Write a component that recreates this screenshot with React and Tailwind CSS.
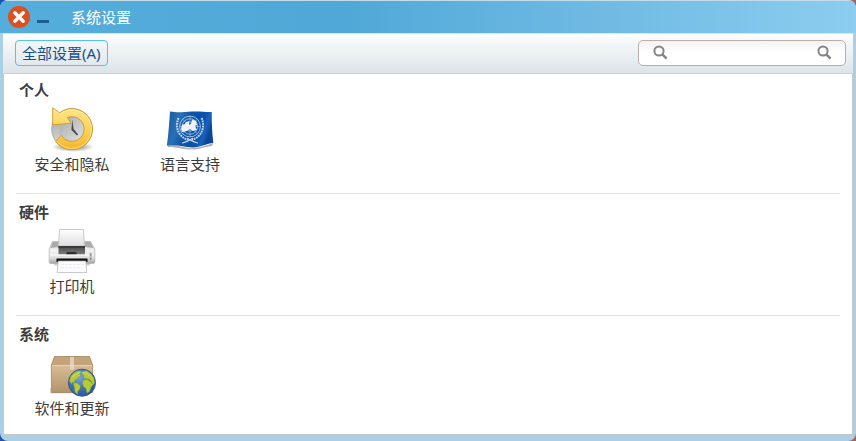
function ClockIcon() {
  return (
    <svg viewBox="0 0 48 48" className="h-12 w-12" aria-hidden="true">
      <defs>
        <linearGradient id="clock-ring" x1="0" y1="0" x2="0" y2="1">
          <stop offset="0" stopColor="#fde58a" />
          <stop offset="0.5" stopColor="#fcd45a" />
          <stop offset="1" stopColor="#f5b52c" />
        </linearGradient>
        <linearGradient id="clock-face" x1="0" y1="0" x2="1" y2="1">
          <stop offset="0" stopColor="#a8a8a8" />
          <stop offset="1" stopColor="#e4e4e4" />
        </linearGradient>
        <linearGradient id="clock-rim" x1="0" y1="0" x2="0" y2="1">
          <stop offset="0" stopColor="#9c9c9c" />
          <stop offset="1" stopColor="#dedede" />
        </linearGradient>
        <radialGradient id="clock-shadow">
          <stop offset="0.5" stopColor="#000" stopOpacity="0.28" />
          <stop offset="1" stopColor="#000" stopOpacity="0" />
        </radialGradient>
      </defs>
      <ellipse cx="25" cy="41" rx="21" ry="5" fill="url(#clock-shadow)" />
      <circle cx="24" cy="23" r="20.3" fill="url(#clock-rim)" stroke="#a2a2a2" strokeWidth="0.8" />
      <circle cx="24" cy="23" r="12.8" fill="url(#clock-face)" stroke="#bcbcbc" />
      <path d="M24.2 13.5L25.6 23L30.2 28.4L29 29.6L23.4 24Z" fill="#4c4c4c" />
      <path
        d="M4.7 1.8L11.6 6.8A20.5 20.5 0 1 1 7.6 35.4L13.2 29.4A12.4 12.4 0 1 0 19.4 11.4L23 17.3L4.7 18.8Z"
        fill="url(#clock-ring)"
        stroke="#cf9a26"
        strokeWidth="0.9"
        strokeLinejoin="round"
      />
      <path
        d="M5.8 3.8L11.8 8.2A19.3 19.3 0 1 1 9 35.4"
        fill="none"
        stroke="#fff0b4"
        strokeWidth="0.9"
        opacity="0.7"
      />
    </svg>
  )
}

function FlagIcon() {
  return (
    <svg viewBox="0 0 48 48" className="h-12 w-12" aria-hidden="true">
      <defs>
        <linearGradient id="flag-cloth" x1="0" y1="0" x2="1" y2="0.25">
          <stop offset="0" stopColor="#17579f" />
          <stop offset="0.3" stopColor="#2c70b4" />
          <stop offset="0.5" stopColor="#0d55a8" />
          <stop offset="0.78" stopColor="#0a4fac" />
          <stop offset="0.9" stopColor="#1a62ba" />
          <stop offset="1" stopColor="#0c4698" />
        </linearGradient>
      </defs>
      <path d="M2 39C12 38 18 43 28 42S42 38 47 37.5L46 40C38 41 33 44 24 43.5S10 41 2 41Z" fill="#000" opacity="0.3" />
      <path
        d="M4 5.5C12 7 17 6 26 5.5S40 6.5 45.8 6C45.4 17 46.4 28 47.3 37C41 37.5 35 41 27 41.5S12 38 .8 39.8C2.6 28 3.2 17 4 5.5Z"
        fill="url(#flag-cloth)"
      />
      <g fill="none" stroke="#c3d9f0">
        <circle cx="24" cy="20.5" r="10.4" strokeWidth="0.8" />
        <circle cx="24" cy="20.5" r="7.8" strokeWidth="0.7" />
        <circle cx="24" cy="20.5" r="4.6" strokeWidth="0.7" />
        <path d="M13.6 20.5H34.4M24 10V31M16.6 13.2L31.4 27.8M31.4 13.2L16.6 27.8" strokeWidth="0.5" />
        <path d="M12.6 12C9 20 11 30 22 34M35.6 12C39 20 37 30 26 34" strokeWidth="2" strokeDasharray="1.8 0.8" />
        <path d="M16 37C20 36.4 24 34 27 32M32 37C28 36.4 24 34 21 32" strokeWidth="1.1" />
      </g>
      <path
        d="M16 19L19 18L20 16L23 15L23 19L25 18L26 13.5L30 15L31 19L29 20L31 24L27 25L24 23L21 25L16 26L15 23Z"
        fill="#eef4fb"
      />
    </svg>
  )
}

function PrinterIcon() {
  return (
    <svg viewBox="0 0 48 48" className="h-12 w-12" aria-hidden="true">
      <defs>
        <linearGradient id="printer-body" x1="0" y1="0" x2="0" y2="1">
          <stop offset="0" stopColor="#c9c9c9" />
          <stop offset="0.4" stopColor="#f2f2f2" />
          <stop offset="0.75" stopColor="#dedede" />
          <stop offset="1" stopColor="#a2a2a2" />
        </linearGradient>
        <linearGradient id="printer-paper" x1="0" y1="0" x2="0" y2="1">
          <stop offset="0" stopColor="#ffffff" />
          <stop offset="1" stopColor="#dedee3" />
        </linearGradient>
        <linearGradient id="printer-panel" x1="0" y1="0" x2="0" y2="1">
          <stop offset="0" stopColor="#474747" />
          <stop offset="1" stopColor="#7c7c7c" />
        </linearGradient>
      </defs>
      <path d="M4 34H44L41 37.5H7Z" fill="#000" opacity="0.2" />
      <path d="M4.5 13.5H42.5L46.8 21V34Q46.8 35.5 45 35.5H3Q1.2 35.5 1.2 34V21Z" fill="url(#printer-body)" stroke="#b0b0b0" strokeWidth="0.7" />
      <path d="M4.8 14H10.5V19L2.6 20ZM37 14H42.2L45.6 20L37 19Z" fill="#aaa" />
      <path d="M11.5 1.5H35.5L36.5 18H10.5Z" fill="url(#printer-paper)" stroke="#bdbdbd" strokeWidth="0.8" />
      <path d="M10.5 18H37V26.5H10.5Z" fill="url(#printer-panel)" />
      <path d="M10.5 18H37V20H10.5Z" fill="#3a3a3a" />
      <path d="M19 24H28L29 26.5H18Z" fill="#2e2e2e" />
      <path d="M2 27H46" stroke="#fff" />
      <path d="M8.5 30.5H39.5V34H8.5Z" fill="#0f0f0f" />
      <path d="M10.2 33H37.8L38.8 44.5H9.2Z" fill="#fbfbfd" stroke="#b3b3b3" strokeWidth="0.7" />
      <path d="M13 36.5H36M13 39.5H34" stroke="#ececf2" strokeDasharray="3 1" />
      <path d="M42.7 24.5V32" stroke="#bcbcbc" strokeWidth="2.2" />
      <path d="M42.7 26V27.5M42.7 30V31.5" stroke="#777" strokeWidth="1.2" />
    </svg>
  )
}

function PackageIcon() {
  return (
    <svg viewBox="0 0 48 48" className="h-12 w-12" aria-hidden="true">
      <defs>
        <linearGradient id="box-front" x1="0" y1="0" x2="0" y2="1">
          <stop offset="0" stopColor="#d6bc96" />
          <stop offset="1" stopColor="#b3946c" />
        </linearGradient>
        <radialGradient id="globe-sea" cx="0.4" cy="0.3" r="0.75">
          <stop offset="0" stopColor="#7ba5da" />
          <stop offset="0.5" stopColor="#3f74b8" />
          <stop offset="1" stopColor="#27569a" />
        </radialGradient>
      </defs>
      <path d="M2 38H30V43.5H2Z" fill="#000" opacity="0.14" />
      <path d="M6.5 6.5H41.5L44.8 15.5H3.2Z" fill="#c2a37a" stroke="#a5855a" strokeWidth="0.8" strokeLinejoin="round" />
      <path d="M3.4 15.5H44.6V42.5H3.4Z" fill="url(#box-front)" stroke="#a5855a" strokeWidth="0.8" />
      <path d="M4 15.5H44" stroke="#e5d0ae" />
      <path d="M22 7H26V19.5H22Z" fill="#e9dcc6" opacity="0.75" />
      <circle cx="34" cy="32.7" r="13.6" fill="url(#globe-sea)" stroke="#2c5288" strokeWidth="0.8" />
      <g fill="#b6cb34" stroke="#8ea52c" strokeWidth="0.4">
        <path d="M21.4 31L23 26L26.5 22.5L30 21L33 21L31.5 23.5L32.5 25.5L30 27.5L28.5 29.5L26.5 30L26.5 32.5L24.5 32L23.5 34Z" />
        <path d="M25.5 33L29 33L32.5 36L31.5 39.5L29.5 41.5L29.5 44.5L27 42L26.5 38Z" />
        <path d="M35 21.5L39 20.8L43 24L45.8 28L46.6 33L45 35L43.5 31.5L41.5 29.5L38 28.5L35.5 28L36 25.5L34 24Z" />
        <path d="M35.5 30L39 29.5L42.5 31.5L45 34.5L43 37L41.5 41.5L39 43L38 38.5L35.5 36.5L34.5 33Z" />
      </g>
      <path d="M24.5 27Q34 18 43.5 27" fill="none" stroke="#fff" strokeWidth="1.5" opacity="0.2" />
    </svg>
  )
}

function SearchGlyph() {
  return (
    <svg viewBox="0 0 16 16" className="h-4 w-4 shrink-0" fill="none" stroke="#858585" aria-hidden="true">
      <circle cx="6" cy="6" r="4.6" strokeWidth="2" />
      <path d="M9.3 9.3L13.6 13.6" strokeWidth="2.4" />
    </svg>
  )
}

const sections = [
  {
    title: '个人',
    items: [
      { name: '安全和隐私', icon: ClockIcon },
      { name: '语言支持', icon: FlagIcon },
    ],
  },
  { title: '硬件', items: [{ name: '打印机', icon: PrinterIcon }] },
  { title: '系统', items: [{ name: '软件和更新', icon: PackageIcon }] },
]

function TitleBar() {
  return (
    <header className="flex h-[33px] items-center border-t border-[#c3dcea] bg-linear-to-r from-[#54addb] via-[#4fa8d7] via-40% to-[#8ccdf0] pl-2">
      <button type="button" aria-label="关闭" className="flex h-[22px] w-[22px] items-center justify-center rounded-full bg-[#dd4f1f]">
        <svg viewBox="0 0 14 14" className="h-3.5 w-3.5" aria-hidden="true">
          <path d="M2.8 2.8L11.2 11.2M11.2 2.8L2.8 11.2" stroke="#fff" strokeWidth="3.4" strokeLinecap="round" />
        </svg>
      </button>
      <button type="button" aria-label="最小化" className="ml-[7px] flex h-[22px] w-4 items-center pt-2">
        <span className="h-[3px] w-3 bg-[#1e5c96]" />
      </button>
      <h1 className="ml-[18px] text-[15px] leading-5 text-white">系统设置</h1>
    </header>
  )
}

function Toolbar() {
  return (
    <div className="mx-[3px] flex h-[41px] items-center justify-between border-y border-t-[#d5e6f0] border-b-[#cbcfd1] bg-linear-to-b from-[#fcfdfe] to-[#dce4e9] pr-[7px] pb-0.5 pl-3">
      <button
        type="button"
        className="flex h-[26px] items-center rounded border border-[#55c4dd] bg-linear-to-b from-[#f3f6f8] to-[#e2e9ed] px-1.5 text-[15px] leading-5 text-[#15508c]"
      >
        全部设置(A)
      </button>
      <label className="flex h-[26px] w-52 items-center gap-1 rounded-[5px] border border-[#bbaea6] bg-linear-to-b from-[#f3f3f3] to-white to-50% pr-3 pl-3.5">
        <SearchGlyph />
        <input type="text" aria-label="搜索" className="min-w-0 flex-1 bg-transparent text-sm outline-none" />
        <SearchGlyph />
      </label>
    </div>
  )
}

function Section({ title, items }) {
  return (
    <section className="border-b border-[#e2e2e2] pt-2 pb-[19px] first:pt-1.5 last:border-b-0 last:pb-3">
      <h2 className="pl-[3px] text-[15px] leading-5 font-bold text-[#3c3c3c]">{title}</h2>
      <div className="mt-1.5 flex gap-1.5">
        {items.map(({ name, icon: Icon }) => (
          <button key={name} type="button" className="flex w-28 flex-col items-center text-[15px] leading-5 text-[#3c3c3c]">
            <Icon />
            {name}
          </button>
        ))}
      </div>
    </section>
  )
}

export default function App() {
  return (
    <div className="min-h-screen bg-linear-to-r from-[#1f50b5] from-50% to-[#a3605c] to-50% font-['Noto_Sans','Noto_Sans_CJK_SC',sans-serif]">
      <div className="flex min-h-screen flex-col overflow-hidden rounded-lg bg-[#abcfe4]">
        <TitleBar />
        <Toolbar />
        <main className="mx-[3px] mb-1.5 flex-1 border-x border-b border-[#c4c8ca] bg-white px-3">
          {sections.map(section => (
            <Section key={section.title} {...section} />
          ))}
        </main>
      </div>
    </div>
  )
}
